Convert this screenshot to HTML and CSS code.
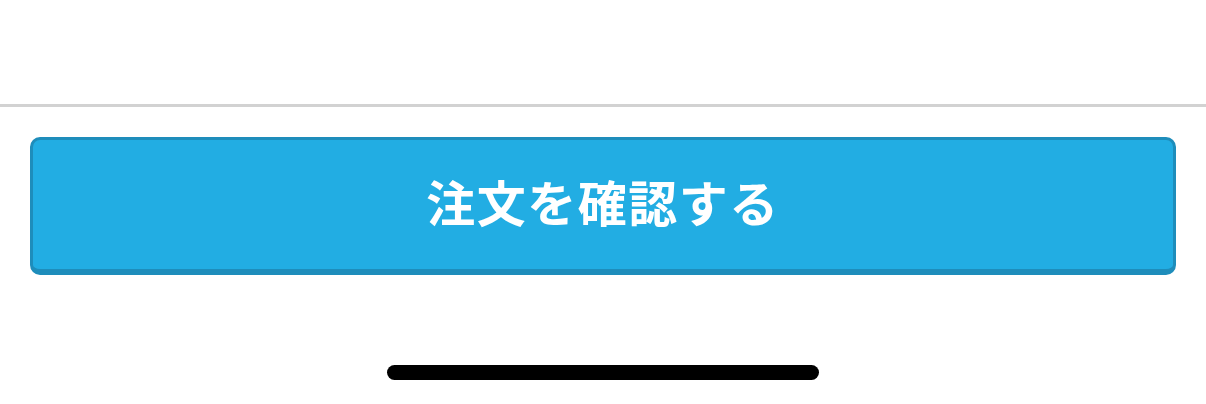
FILE: index.html
```html
<!DOCTYPE html>
<html lang="ja">
<head>
<meta charset="utf-8">
<link rel="stylesheet" href="styles.css">
</head>
<body>
<div class="screen">
  <div class="top"></div>
  <div class="divider"></div>
  <div class="actions">
    <button class="confirm">注文を確認する</button>
  </div>
  <div class="home-area">
    <div class="home-indicator"></div>
  </div>
</div>
</body>
</html>
```
FILE: styles.css
```css
html, body {
  margin: 0;
  padding: 0;
  background: #ffffff;
}
.screen {
  width: 1206px;
  height: 404px;
  display: flex;
  flex-direction: column;
  overflow: hidden;
}
.top {
  height: 104px;
}
.divider {
  height: 3px;
  background: #d2d2d2;
}
.actions {
  padding: 30px 30px 0 30px;
  display: flex;
}
.confirm {
  flex: 1;
  height: 138px;
  box-sizing: border-box;
  background: #22ade3;
  border: 3px solid #1e8dbb;
  border-bottom-width: 6px;
  border-radius: 10px;
  color: #ffffff;
  font-family: "Noto Sans CJK JP", "Noto Sans", sans-serif;
  font-weight: 700;
  font-size: 49px;
  letter-spacing: 1.5px;
  padding: 0 0 8px 0;
  margin: 0;
  display: flex;
  align-items: center;
  justify-content: center;
}
.home-area {
  display: flex;
  justify-content: center;
  padding-top: 90px;
}
.home-indicator {
  width: 432px;
  height: 15px;
  border-radius: 8px;
  background: #000000;
}
```
